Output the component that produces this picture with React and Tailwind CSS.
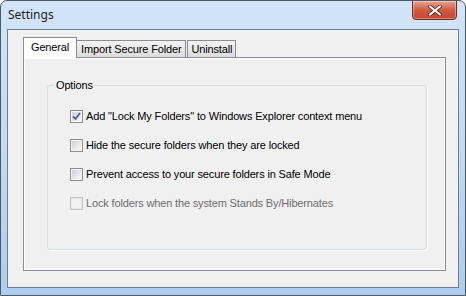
const font = { fontFamily: '"Liberation Sans", Arial, sans-serif' }

function CheckBox({ checked, disabled }) {
  return (
    <span
      className={`flex h-[13px] w-[13px] shrink-0 items-center justify-center border ${
        disabled ? 'border-[#c5c5c5] bg-[#f4f4f4]' : 'border-[#8e8f8f] bg-white'
      }`}
    >
      <span
        className={`flex h-[11px] w-[11px] items-center justify-center border ${
          disabled
            ? 'border-[#e6e6e6] bg-[#f2f2f2]'
            : 'border-[#f4f4f4] bg-gradient-to-br from-[#cbcfd5] via-[#e4e6e9] to-[#f6f6f6]'
        }`}
      >
        {checked && (
          <svg width="9" height="9" viewBox="0 0 9 9">
            <path d="M1 4.5 L3.5 7 L8 1" fill="none" stroke="#4a5f97" strokeWidth="1.8" />
          </svg>
        )}
      </span>
    </span>
  )
}

const options = [
  { label: 'Add "Lock My Folders" to Windows Explorer context menu', checked: true },
  { label: 'Hide the secure folders when they are locked' },
  { label: 'Prevent access to your secure folders in Safe Mode' },
  { label: 'Lock folders when the system Stands By/Hibernates', disabled: true },
]

export default function App() {
  return (
    <div
      className="relative flex h-[296px] w-[466px] flex-col overflow-hidden rounded-t-[7px] border border-[#4d5a66] bg-gradient-to-b from-[#d2e4f7] via-[#c3daf2] to-[#adcdee] text-[11px] tracking-[-0.15px] text-black"
      style={font}
    >
      <div className="flex h-[28px] shrink-0 items-center pl-[7px] text-[12px] tracking-normal text-[#1e1e1e]">
        <span style={{ fontFamily: '"Noto Sans", "Open Sans", sans-serif' }}>Settings</span>
      </div>

      <div className="absolute right-[8px] top-[-1px] flex h-[20px] w-[45px] items-center justify-center rounded-b-[4px] border border-[#6e2a22] bg-gradient-to-b from-[#e8a493] via-[#cf5b44] to-[#c7462d] shadow-[inset_0_0_0_1px_rgba(255,255,255,0.35)]">
        <svg width="14" height="11" viewBox="0 0 14 11">
          <path d="M2 1.5 L12 9.5 M12 1.5 L2 9.5" stroke="#5a1c14" strokeWidth="3.6" strokeLinecap="square" />
          <path d="M2 1.5 L12 9.5 M12 1.5 L2 9.5" stroke="#ffffff" strokeWidth="2" strokeLinecap="square" />
        </svg>
      </div>

      <div className="mx-[6px] mb-[7px] flex flex-1 flex-col border border-[#6f7f8f] bg-[#f0f0f0] pl-[15px] pr-[12px] pt-[7px] pb-[16px]">
        <div className="flex items-end">
          <div className="z-10 -mb-px flex h-[21px] items-center border border-b-0 border-[#898c95] bg-white px-[7px] pb-[2px]">
            General
          </div>
          <div className="flex h-[17px] items-center border border-b-0 border-l-0 border-[#898c95] bg-gradient-to-b from-[#f3f3f3] to-[#dcdcdc] px-[4px]">
            Import Secure Folder
          </div>
          <div className="ml-[1px] flex h-[17px] items-center border border-b-0 border-[#898c95] bg-gradient-to-b from-[#f3f3f3] to-[#dcdcdc] px-[3px]">
            Uninstall
          </div>
        </div>

        <div className="flex flex-1 flex-col border border-[#898c95] bg-[#f0f0f0] pl-[23px] pr-[18px] pt-[27px] pb-[20px] shadow-[inset_0_0_0_1px_#ffffff]">
          <div className="relative flex-1 rounded-[3px] border border-[#d5dfe5] shadow-[1px_1px_0_#ffffff]">
            <span className="absolute left-[6px] top-[-8px] bg-[#f0f0f0] px-[2px] leading-[14px]">
              Options
            </span>
            <div className="flex flex-col gap-[12px] pl-[22px] pt-[22px]">
              {options.map((o) => (
                <div key={o.label} className="flex h-[17px] items-center gap-[3px]">
                  <CheckBox checked={o.checked} disabled={o.disabled} />
                  <span className={o.disabled ? 'text-[#6d6d6d]' : ''}>{o.label}</span>
                </div>
              ))}
            </div>
          </div>
        </div>
      </div>
    </div>
  )
}
